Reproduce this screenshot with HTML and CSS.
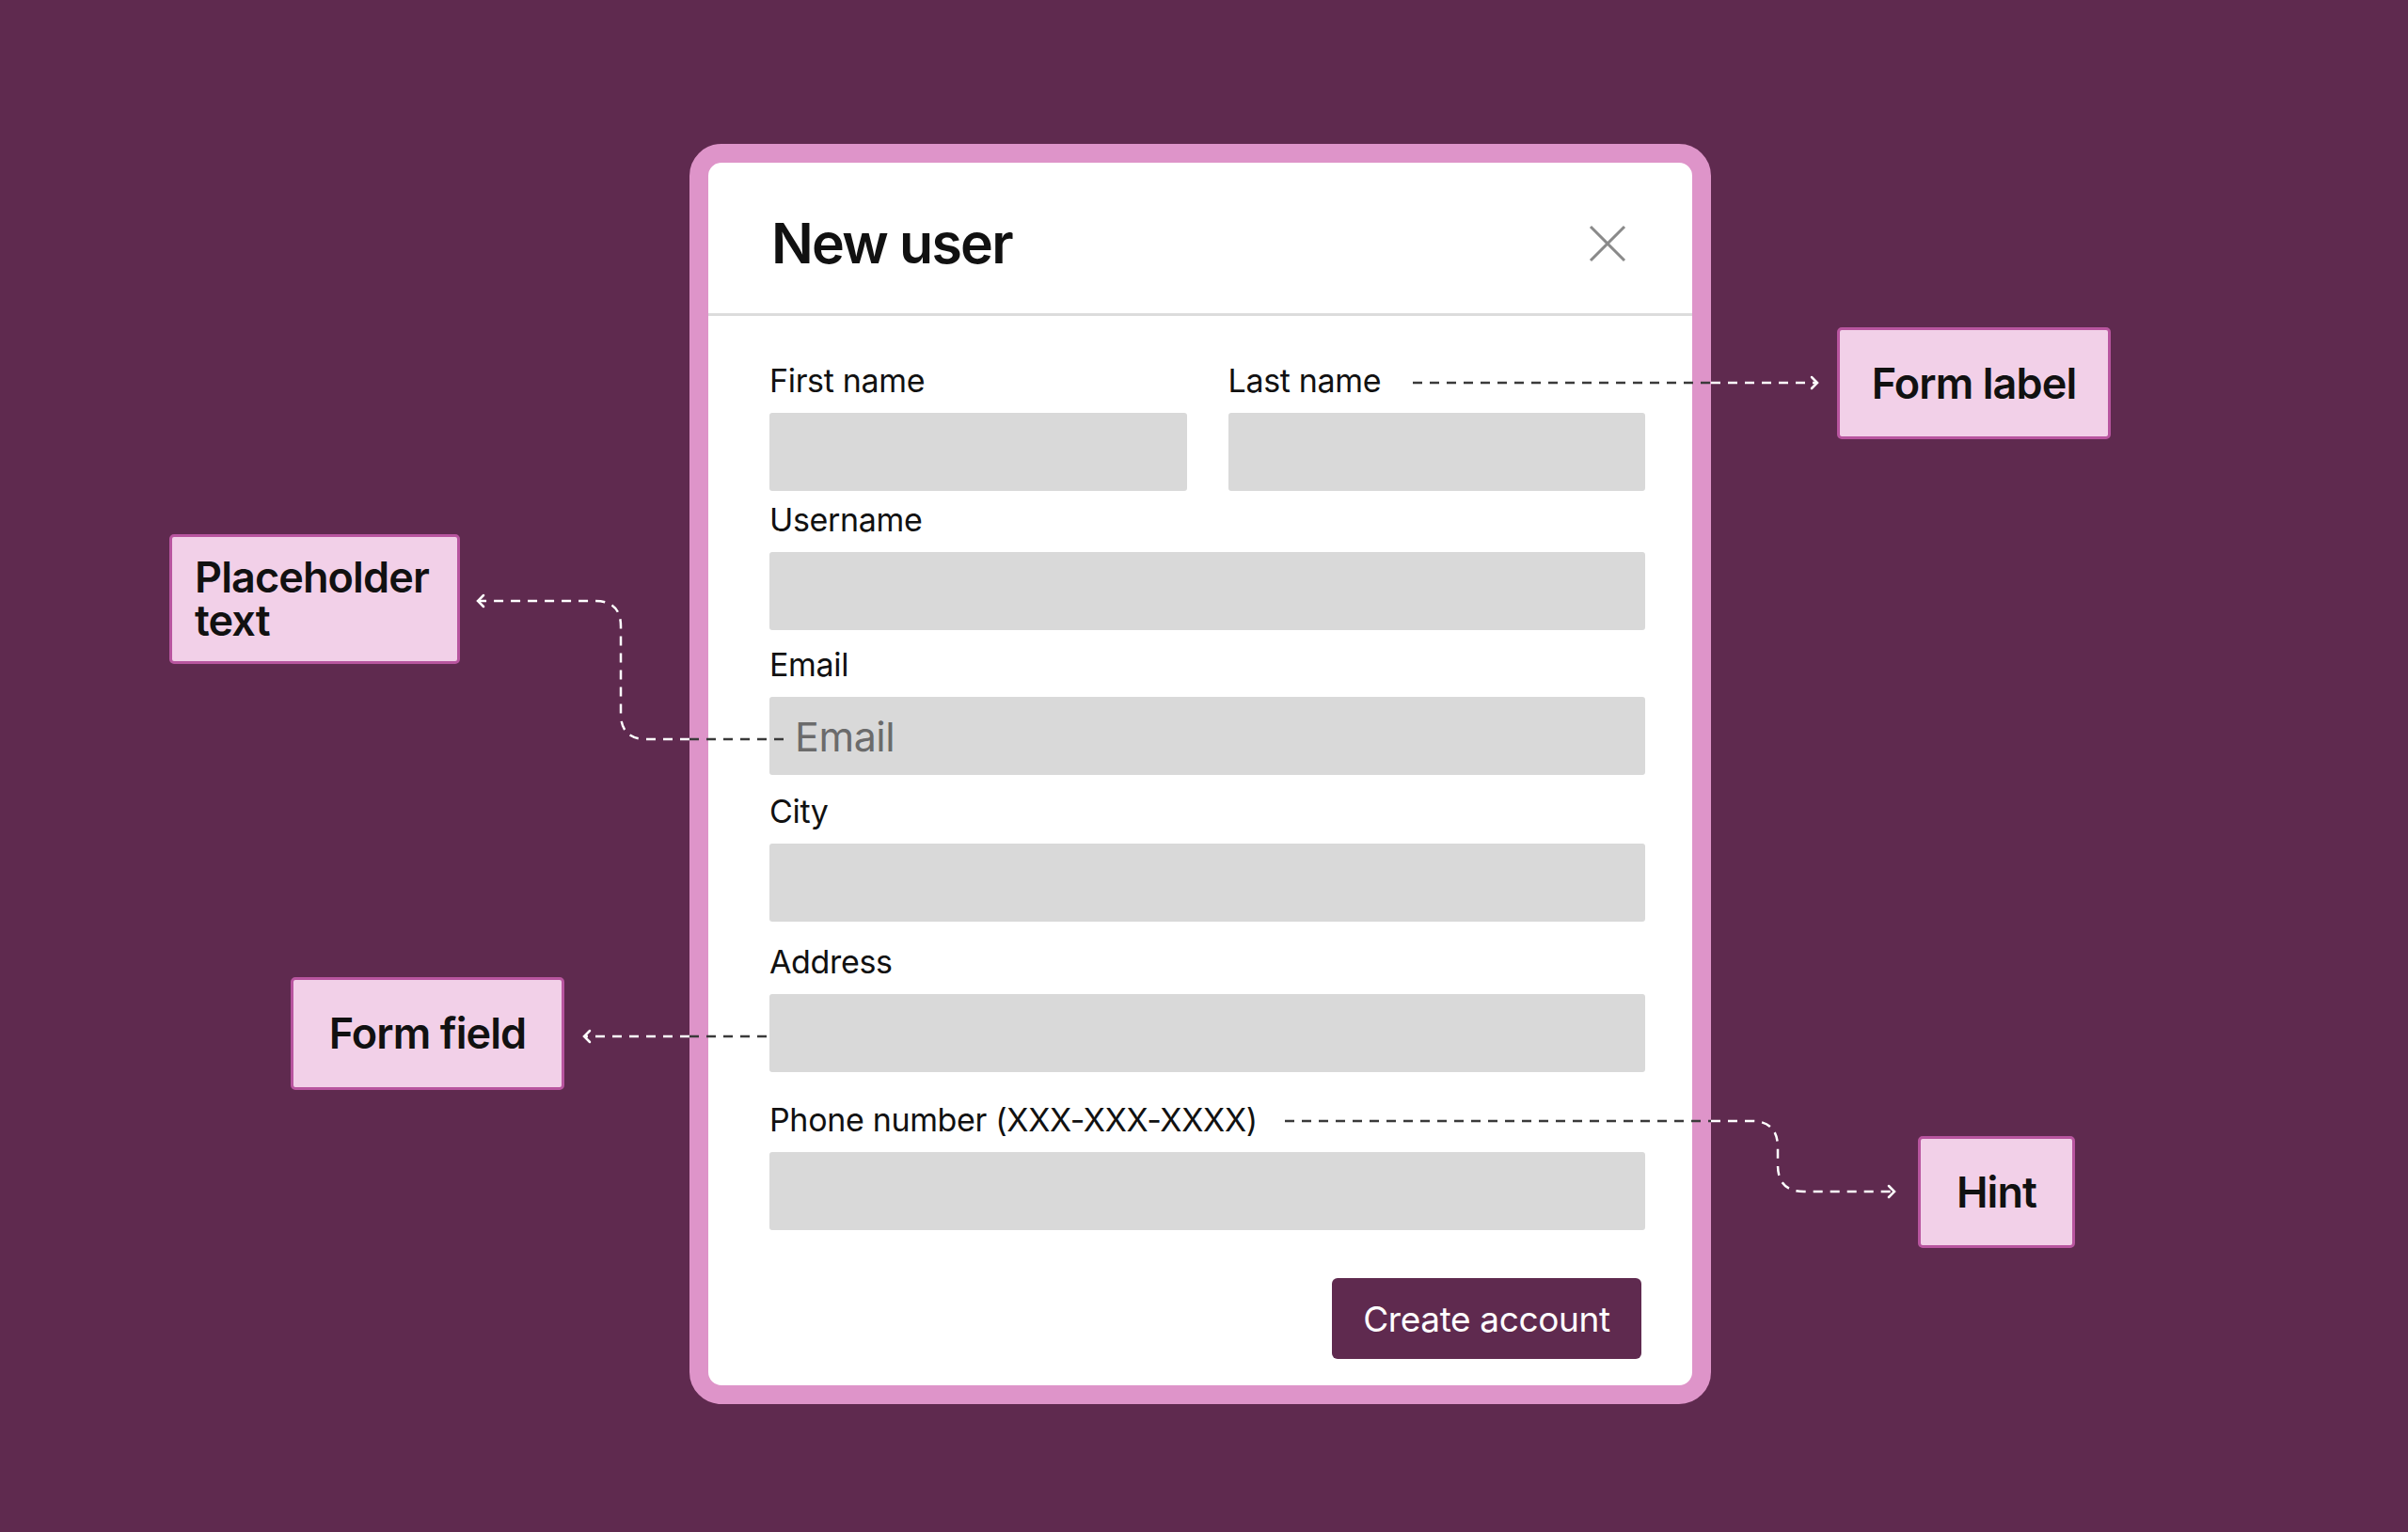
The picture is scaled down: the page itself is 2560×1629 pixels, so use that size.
FILE: index.html
```html
<!DOCTYPE html>
<html lang="en">
<head>
  <meta charset="UTF-8" />
  <meta name="viewport" content="width=device-width, initial-scale=1.0" />
  <title>New user form anatomy</title>
  <link rel="stylesheet" href="styles.css">
</head>
<body>
  <div class="stage">
    <div class="modal">
      <div class="modal-head">
        <h2>New user</h2>
        <button class="close-btn" aria-label="Close">
          <svg viewBox="0 0 40 40" width="40" height="40">
            <path d="M2 2L38 38M38 2L2 38" stroke="#8a8a8a" stroke-width="3" fill="none"/>
          </svg>
        </button>
      </div>

      <form class="modal-body">
        <div class="row row-split">
          <div class="field-group">
            <label>First name</label>
            <div class="field"></div>
          </div>
          <div class="field-group">
            <label>Last name</label>
            <div class="field"></div>
          </div>
        </div>
        <div class="row">
          <label>Username</label>
          <div class="field"></div>
        </div>
        <div class="row">
          <label>Email</label>
          <div class="field"><span class="placeholder">Email</span></div>
        </div>
        <div class="row">
          <label>City</label>
          <div class="field"></div>
        </div>
        <div class="row">
          <label>Address</label>
          <div class="field"></div>
        </div>
        <div class="row">
          <label>Phone number (XXX-XXX-XXXX)</label>
          <div class="field"></div>
        </div>
        <div class="actions">
          <button type="button" class="create-btn">Create account</button>
        </div>
      </form>
    </div>

    <!-- callouts -->
    <div class="callout callout-placeholder">
      <span class="callout-line">Placeholder</span>
      <span class="callout-line">text</span>
    </div>
    <div class="callout callout-label">Form label</div>
    <div class="callout callout-field">Form field</div>
    <div class="callout callout-hint">Hint</div>

    <svg class="connectors" viewBox="0 0 2560 1629" width="2560" height="1629">
      <g fill="none" stroke="#ffffff" stroke-width="2.5" stroke-dasharray="10 8">
        <path d="M1819 407H1930"/>
        <path d="M733 786H687Q660 786 660 759V666Q660 639 633 639H510"/>
        <path d="M733 1102H623"/>
        <path d="M1819 1192H1862Q1890 1192 1890 1220V1239Q1890 1267 1918 1267H2012"/>
      </g>
      <g fill="none" stroke="#ffffff" stroke-width="2.5" stroke-linecap="round">
        <path d="M1926 401L1932 407L1926 413"/>
        <path d="M514 633L508 639L514 645"/>
        <path d="M627 1096L621 1102L627 1108"/>
        <path d="M2008 1261L2014 1267L2008 1273"/>
      </g>
      <g fill="none" stroke="#3a3a3a" stroke-width="2.5" stroke-dasharray="10 8">
        <path d="M1502 407H1819"/>
        <path d="M733 786H834"/>
        <path d="M733 1102H817"/>
        <path d="M1366 1192H1819"/>
      </g>
    </svg>
  </div>
</body>
</html>
```

FILE: styles.css
```css
body {
  margin: 0;
  padding: 0;
  font-family: 'Inter', 'Liberation Sans', sans-serif;
  background: #5f2a4f;
}

.stage {
  position: relative;
  width: 2560px;
  height: 1629px;
  padding: 153px 0 0 733px;
  box-sizing: border-box;
}

.modal {
  width: 1086px;
  box-sizing: border-box;
  background: #fff;
  border: 20px solid #de94c9;
  border-radius: 34px;
}

.modal-head {
  display: flex;
  justify-content: space-between;
  align-items: center;
  padding: 56px 70px 44px 67px;
  border-bottom: 3px solid #dcdcdc;
}

.modal-head h2 {
  margin: 0;
  font-size: 59px;
  line-height: 60px;
  font-weight: 600;
  letter-spacing: -0.03em;
  color: #111;
}

.close-btn {
  background: none;
  border: none;
  padding: 0;
  width: 40px;
  height: 40px;
  cursor: pointer;
}

.close-btn svg {
  display: block;
}

.modal-body {
  padding: 52px 50px 28px 65px;
}

.row label,
.field-group label {
  display: block;
  font-size: 34px;
  line-height: 33px;
  color: #111;
  margin-bottom: 18px;
  letter-spacing: -0.01em;
}

.row-split {
  display: grid;
  grid-template-columns: 1fr 1fr;
  gap: 44px;
}

.field {
  height: 83px;
  background: #d9d9d9;
  border-radius: 3px;
  display: flex;
  align-items: center;
  padding-left: 27px;
}

.placeholder {
  font-size: 43px;
  color: #6b6b6b;
  letter-spacing: -0.01em;
}

.row:nth-child(2) { margin-top: 14px; }
.row:nth-child(3) { margin-top: 20px; }
.row:nth-child(4) { margin-top: 22px; }
.row:nth-child(5) { margin-top: 26px; }
.row:nth-child(6) { margin-top: 34px; }

.actions {
  display: flex;
  justify-content: flex-end;
  margin-top: 51px;
  padding-right: 4px;
}

.create-btn {
  width: 329px;
  height: 86px;
  background: #5f2a4f;
  color: #fff;
  border: none;
  border-radius: 6px;
  font-family: inherit;
  font-size: 37px;
  letter-spacing: -0.01em;
  cursor: pointer;
}

.callout {
  position: absolute;
  box-sizing: border-box;
  display: flex;
  align-items: center;
  justify-content: center;
  background: #f2d0e8;
  border: 3px solid #b8559f;
  border-radius: 5px;
  color: #111;
  font-size: 45px;
  font-weight: 600;
  letter-spacing: -0.02em;
  line-height: 46px;
}

.callout-placeholder {
  left: 180px;
  top: 568px;
  width: 309px;
  height: 138px;
  flex-direction: column;
  align-items: flex-start;
  padding-left: 24px;
}

.callout-line {
  display: block;
  height: 46px;
  line-height: 46px;
}

.callout-label {
  left: 1953px;
  top: 348px;
  width: 291px;
  height: 119px;
}

.callout-field {
  left: 309px;
  top: 1039px;
  width: 291px;
  height: 120px;
}

.callout-hint {
  left: 2039px;
  top: 1208px;
  width: 167px;
  height: 119px;
}

.connectors {
  position: absolute;
  left: 0;
  top: 0;
  pointer-events: none;
}
```
